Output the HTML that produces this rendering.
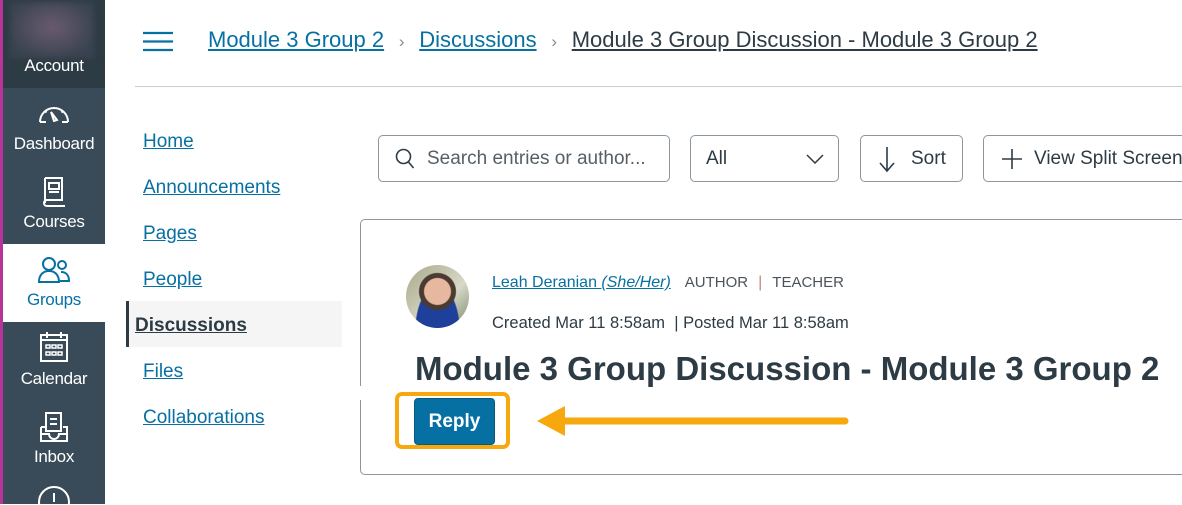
<!DOCTYPE html>
<html><head><style>
*{margin:0;padding:0;box-sizing:border-box}
body{width:1182px;height:504px;overflow:hidden;background:#fff;font-family:"Liberation Sans",sans-serif;position:relative;color:#2d3b45}
.abs{position:absolute}
.side{left:0;top:0;width:105px;height:504px;background:#394b58;border-left:3px solid #b8349a}
.nav{position:absolute;left:3px;width:102px;text-align:center;color:#fff;font-size:17px;letter-spacing:-0.3px}
a{color:#0770a3;text-decoration:underline}
.btn{position:absolute;top:135px;height:47px;border:1px solid #8b969e;border-radius:5px;font-size:19px;color:#2d3b45;display:flex;align-items:center}
</style></head><body>
<div class="abs" style="left:0;top:0;width:95px;height:2px;background:#b8349a"></div>
<div class="abs side"></div>
<div class="abs" style="left:3px;top:0;width:102px;height:88px;background:#2d3b45"></div>
<div class="abs" style="left:10px;top:2px;width:84px;height:56px;background:radial-gradient(ellipse at 50% 45%,#6a5a70,#3a4450 75%);filter:blur(3px)"></div>
<div class="nav" style="top:56px">Account</div>
<svg class="abs" style="left:37px;top:100px" width="34" height="26" viewBox="0 0 34 26" fill="none" stroke="#fff" stroke-width="2"><path d="M3 22 A14 14 0 1 1 31 22 M3 22h6 M25 22h6 M17 7v2 M8 11l1.5 1.5 M26 11l-1.5 1.5 M14 12l3 9 3-1z"/></svg>
<div class="nav" style="top:134px">Dashboard</div>
<svg class="abs" style="left:41px;top:176px" width="26" height="32" viewBox="0 0 26 32" fill="none" stroke="#fff" stroke-width="2"><path d="M4 2h17v22H6a3 3 0 0 0 0 6h18 M4 2v25 M8 7h10v6H8z M8 16h10"/></svg>
<div class="nav" style="top:212px">Courses</div>
<div class="abs" style="left:3px;top:244px;width:102px;height:78px;background:#fff"></div>
<svg class="abs" style="left:37px;top:256px" width="34" height="28" viewBox="0 0 34 28" fill="none" stroke="#0770a3" stroke-width="2"><circle cx="12" cy="8" r="6"/><path d="M2 26c0-8 5-11 10-11s10 3 10 11z"/><circle cx="25" cy="9" r="4"/><path d="M24 16c5 0 8 3 8 9h-9"/></svg>
<div class="nav" style="top:290px;color:#0770a3">Groups</div>
<svg class="abs" style="left:39px;top:331px" width="30" height="32" viewBox="0 0 30 32" fill="none" stroke="#fff" stroke-width="2"><rect x="2" y="4" width="26" height="26"/><path d="M8 1v6 M22 1v6 M2 9h26"/><path d="M7 14h4v3H7zM13 14h4v3h-4zM19 14h4v3h-4zM7 21h4v3H7zM13 21h4v3h-4zM19 21h4v3h-4z" stroke-width="1.5"/></svg>
<div class="nav" style="top:369px">Calendar</div>
<svg class="abs" style="left:37px;top:411px" width="34" height="32" viewBox="0 0 34 32" fill="none" stroke="#fff" stroke-width="2"><path d="M9 2h15v18H9z M13 8h7 M13 13h7 M4 16v14h26V16h-4 M4 16h4 M4 23h8a5 5 0 0 0 10 0h8"/></svg>
<div class="nav" style="top:447px">Inbox</div>
<svg class="abs" style="left:37px;top:485px" width="34" height="20" viewBox="0 0 34 20" fill="none" stroke="#fff" stroke-width="2"><circle cx="17" cy="17" r="15"/><path d="M17 8v9"/></svg>

<svg class="abs" style="left:142px;top:30px" width="32" height="24" viewBox="0 0 32 24" stroke="#0770a3" stroke-width="2.2"><path d="M1 3h30M1 11.5h30M1 20h30"/></svg>
<div class="abs" style="left:208px;top:27px;font-size:22px;white-space:nowrap"><a>Module 3 Group 2</a><span style="color:#888;font-size:17px;margin:0 10px"> › </span><a>Discussions</a><span style="color:#888;font-size:17px;margin:0 10px"> › </span><a style="color:#2d3b45">Module 3 Group Discussion - Module 3 Group 2</a></div>
<div class="abs" style="left:135px;top:86px;width:1047px;height:1px;background:#c7cdd1"></div>

<div class="abs" style="left:126px;top:301px;width:216px;height:46px;background:#f5f5f5;border-left:3px solid #2d3b45"></div>
<div class="abs" style="left:143px;top:119px;font-size:19px;line-height:46px;white-space:nowrap">
<a>Home</a><br><a>Announcements</a><br><a>Pages</a><br><a>People</a><br><a style="color:#2d3b45;font-weight:bold;margin-left:-8px">Discussions</a><br><a>Files</a><br><a>Collaborations</a></div>

<div class="btn" style="left:378px;width:292px"><svg style="margin:0 12px 0 16px" width="20" height="22" viewBox="0 0 20 22" fill="none" stroke="#2d3b45" stroke-width="1.6"><circle cx="8.5" cy="8.5" r="7"/><path d="M13.5 14l5 6"/></svg><span style="color:#555f66">Search entries or author...</span></div>
<div class="btn" style="left:690px;width:149px;padding-left:15px">All<svg style="position:absolute;right:14px" width="18" height="10" viewBox="0 0 18 10" fill="none" stroke="#2d3b45" stroke-width="1.5"><path d="M1 1l8 8 8-8"/></svg></div>
<div class="btn" style="left:860px;width:103px;padding-left:18px"><svg width="16" height="28" viewBox="0 0 16 28" fill="none" stroke="#2d3b45" stroke-width="1.6"><path d="M8 2v24M1 18l7 8 7-8"/></svg><span style="margin-left:16px">Sort</span></div>
<div class="btn" style="left:983px;width:220px;padding-left:18px;white-space:nowrap"><svg width="20" height="20" viewBox="0 0 20 20" stroke="#2d3b45" stroke-width="1.6"><path d="M10 0v20M0 10h20"/></svg><span style="margin-left:12px">View Split Screen</span></div>

<div class="abs" style="left:360px;top:219px;width:840px;height:256px;border:1px solid #8b969e;border-radius:5px"></div>
<div class="abs" style="left:360px;top:386px;width:2px;height:14px;background:#fff"></div>
<div class="abs" style="left:406px;top:265px;width:63px;height:63px;border-radius:50%;background:radial-gradient(circle at 50% 42%,#e6b8a0 0 13px,#4a3a30 14px 18px,transparent 19px),radial-gradient(ellipse at 50% 110%,#1e3f9a 0 22px,transparent 23px),linear-gradient(135deg,#a8a888,#d8d8c8 60%,#7a8a6a)"></div>
<div class="abs" style="left:492px;top:274px;font-size:16px;white-space:nowrap"><a>Leah Deranian <i>(She/Her)</i></a><span style="color:#4a545c;margin-left:14px;font-size:15px">AUTHOR</span><span style="color:#b88;margin:0 10px">|</span><span style="color:#4a545c;font-size:15px">TEACHER</span></div>
<div class="abs" style="left:492px;top:314px;font-size:16.5px;white-space:nowrap">Created Mar 11 8:58am &nbsp;| Posted Mar 11 8:58am</div>
<div class="abs" style="left:415px;top:350px;font-size:33px;font-weight:bold;white-space:nowrap;letter-spacing:0px">Module 3 Group Discussion - Module 3 Group 2</div>
<div class="abs" style="left:395px;top:392px;width:115px;height:57px;border:4px solid #f6a80e;border-radius:7px"></div>
<div class="abs" style="left:414px;top:398px;width:81px;height:47px;background:#0770a3;border:1px solid #0a5a80;border-radius:4px;color:#fff;font-weight:bold;font-size:19px;display:flex;align-items:center;justify-content:center">Reply</div>
<svg class="abs" style="left:535px;top:404px" width="318" height="34" viewBox="0 0 318 34"><path d="M28 17H310" stroke="#f6a80e" stroke-width="7" stroke-linecap="round"/><path d="M2 17L30 2v30z" fill="#f6a80e"/></svg>
</body></html>
